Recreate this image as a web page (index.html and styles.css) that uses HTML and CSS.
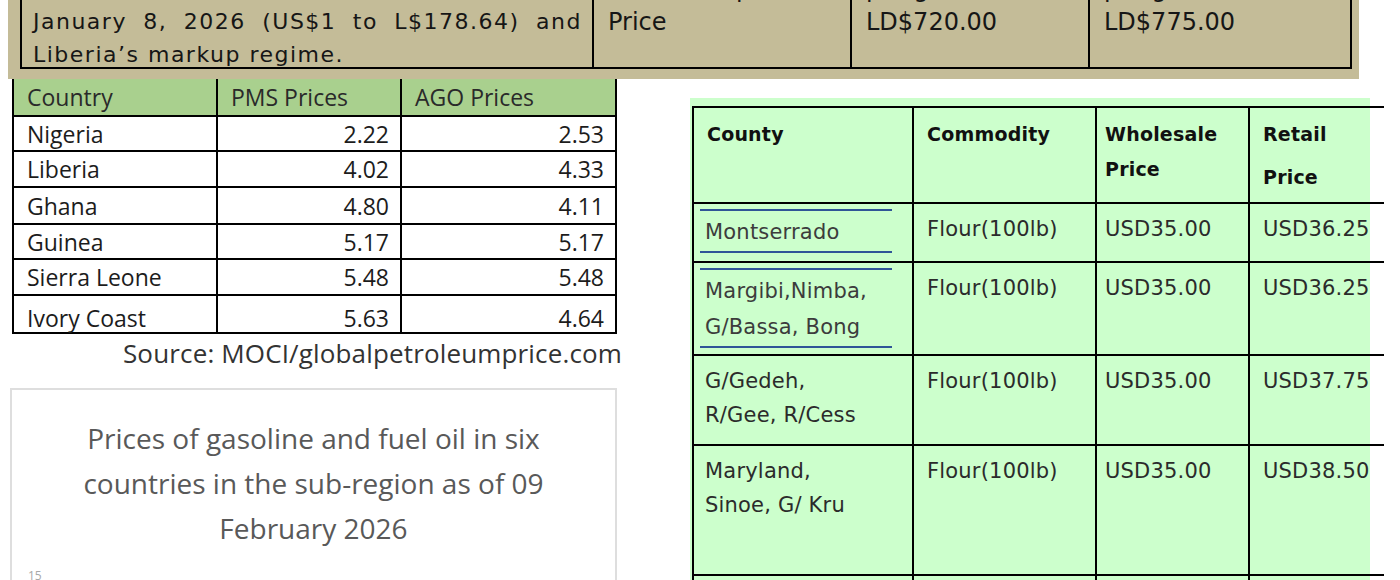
FILE: index.html
```html
<!DOCTYPE html>
<html lang="en">
<head>
<meta charset="utf-8">
<title>Fuel and flour prices</title>
<link rel="stylesheet" href="styles.css">
</head>
<body>
<div class="page">
  <div class="band">
    <table class="band-table">
      <colgroup><col class="bc1"><col class="bc2"><col class="bc3"><col class="bc4"></colgroup>
      <tr>
        <td class="band-text">
          <div class="line">by the Central Bank of Liberia as of</div>
          <div class="jline">January 8, 2026 (US$1 to L$178.64) and</div>
          <div class="line">Liberia’s markup regime.</div>
        </td>
        <td class="band-val"><div class="line">Retail Pump</div><div class="line">Price</div></td>
        <td class="band-val"><div class="line">per gallon</div><div class="line">LD$720.00</div></td>
        <td class="band-val"><div class="line">per gallon</div><div class="line">LD$775.00</div></td>
      </tr>
    </table>
  </div>

  <div class="lower">
    <div class="left-col">
      <table class="fuel">
        <colgroup><col class="fc1"><col class="fc2"><col class="fc3"></colgroup>
        <tr class="fuel-head"><th>Country</th><th>PMS Prices</th><th>AGO Prices</th></tr>
        <tr class="r1"><td>Nigeria</td><td class="num">2.22</td><td class="num">2.53</td></tr>
        <tr class="r2"><td>Liberia</td><td class="num">4.02</td><td class="num">4.33</td></tr>
        <tr class="r3"><td>Ghana</td><td class="num">4.80</td><td class="num">4.11</td></tr>
        <tr class="r4"><td>Guinea</td><td class="num">5.17</td><td class="num">5.17</td></tr>
        <tr class="r5"><td>Sierra Leone</td><td class="num">5.48</td><td class="num">5.48</td></tr>
        <tr class="r6"><td>Ivory Coast</td><td class="num">5.63</td><td class="num">4.64</td></tr>
      </table>
      <p class="source">Source: MOCI/globalpetroleumprice.com</p>
      <div class="caption">
        <p class="caption-text">Prices of gasoline and fuel oil in six<br>countries in the sub-region as of 09<br>February 2026</p>
        <p class="caption-note">15</p>
      </div>
    </div>

    <div class="right-col">
      <table class="flour">
        <colgroup><col class="gc1"><col class="gc2"><col class="gc3"><col class="gc4"></colgroup>
        <tr class="h-row">
          <th>County</th>
          <th>Commodity</th>
          <th class="wh-h">Wholesale<br>Price</th>
          <th class="retail-h">Retail<br>Price</th>
        </tr>
        <tr class="row-a">
          <td><div class="county-box">Montserrado</div></td>
          <td>Flour(100lb)</td><td class="wh">USD35.00</td><td>USD36.25</td>
        </tr>
        <tr class="row-b">
          <td><div class="county-box">Margibi,Nimba,<br>G/Bassa, Bong</div></td>
          <td>Flour(100lb)</td><td class="wh">USD35.00</td><td>USD36.25</td>
        </tr>
        <tr class="row-c">
          <td>G/Gedeh,<br>R/Gee, R/Cess</td>
          <td>Flour(100lb)</td><td class="wh">USD35.00</td><td>USD37.75</td>
        </tr>
        <tr class="row-d">
          <td>Maryland,<br>Sinoe, G/ Kru</td>
          <td>Flour(100lb)</td><td class="wh">USD35.00</td><td>USD38.50</td>
        </tr>
        <tr class="row-e">
          <td>&nbsp;</td><td>&nbsp;</td><td>&nbsp;</td><td>&nbsp;</td>
        </tr>
      </table>
    </div>
  </div>
</div>
</body>
</html>
```

FILE: styles.css
```css
* { box-sizing: border-box; }
html, body { margin: 0; padding: 0; background: #ffffff; }
p { margin: 0; }

.page {
  width: 1400px;
  height: 580px;
  overflow: hidden;
  background: #ffffff;
}

/* ---------- tan band at the top ---------- */
.band {
  width: 1351px;
  margin: -23px 0 0 8px;
  padding: 0 9px 10px 12px;
  background: #c4bc98;
}
.band-table {
  border-collapse: collapse;
  width: 1330px;
  table-layout: fixed;
  font-family: "DejaVu Sans", sans-serif;
  color: #161616;
}
.bc1 { width: 572px; }
.bc2 { width: 258px; }
.bc3 { width: 238px; }
.bc4 { width: 262px; }
.band-table td {
  border: 2px solid #000;
  border-top: none;
  vertical-align: top;
  padding: 0;
}
.band-table .line,
.band-table .jline {
  line-height: 24px;
  height: 24px;
  white-space: nowrap;
}
.band-table .line + .line,
.band-table .line + .jline,
.band-table .jline + .line { margin-top: 9px; }
.band-text {
  padding: 0 10px 0 11px !important;
  font-size: 22px;
  letter-spacing: 1.5px;
}
.band-text .jline {
  white-space: normal;
  text-align: justify;
  text-align-last: justify;
}
.band-val {
  padding: 0 0 0 14px !important;
  font-size: 24px;
  letter-spacing: 0;
}

/* ---------- lower area ---------- */
.lower {
  display: flex;
  align-items: flex-start;
}
.left-col {
  width: 612px;
  margin-left: 10px;
}
.right-col {
  width: 680px;
  height: 520px;
  margin: 19px 0 0 68px;
  padding: 8px 0 0 2px;
  background: #ccffcc;
}

/* fuel price table */
.fuel {
  margin-left: 2px;
  width: 603px;
  border-collapse: collapse;
  table-layout: fixed;
  font-family: "Open Sans", sans-serif;
  font-size: 23px;
  color: #1c1c1c;
}
.fc1 { width: 204px; }
.fc2 { width: 184px; }
.fc3 { width: 215px; }
.fuel th, .fuel td {
  border: 2px solid #000;
  padding: 0 11px 0 13px;
  text-align: left;
  font-weight: normal;
  line-height: 28px;
  white-space: nowrap;
}
.fuel-head th {
  border-top: none;
  background: #a9d08e;
  height: 37px;
  color: #2a2a2a;
}
.fuel .num { text-align: right; }
.fuel .r1 td { height: 35px; }
.fuel .r2 td { height: 36px; }
.fuel .r3 td { height: 37px; }
.fuel .r4 td { height: 35px; }
.fuel .r5 td { height: 36px; }
.fuel .r6 td { height: 38px; vertical-align: bottom; padding-bottom: 0; }

.source {
  text-align: right;
  font-family: "Open Sans", sans-serif;
  font-size: 26px;
  letter-spacing: 0.15px;
  line-height: 30px;
  margin-top: 4px;
  color: #333;
}

.caption {
  width: 607px;
  height: 200px;
  margin-top: 20px;
  border: 2px solid #dedede;
  padding-top: 26px;
  font-family: "Open Sans", sans-serif;
  color: #595959;
}
.caption-text {
  text-align: center;
  font-size: 28px;
  line-height: 45px;
}
.caption-note {
  margin: 16px 0 0 16px;
  font-size: 12px;
  color: #a8a8a8;
}

/* flour price table */
.flour {
  width: 691px;
  border-collapse: collapse;
  table-layout: fixed;
  font-family: "DejaVu Sans", sans-serif;
  font-size: 21px;
  color: #2b2b2b;
  letter-spacing: 0.2px;
}
.gc1 { width: 220px; }
.gc2 { width: 183px; }
.gc3 { width: 153px; }
.gc4 { width: 135px; }
.flour th, .flour td {
  border: 2px solid #000;
  vertical-align: top;
  text-align: left;
  padding: 8px 0 0 13px;
  line-height: 34px;
  white-space: nowrap;
}
.flour th:last-child, .flour td:last-child { border-right: none; }
.flour th {
  font-size: 19px;
  font-weight: bold;
  color: #111;
  padding-top: 9px;
  line-height: 35px;
}
.flour .wh-h, .flour .wh { padding-left: 8px; }
.flour .retail-h { line-height: 43px; padding-top: 5px; }
.h-row th { height: 96px; }
.row-a td { height: 59px; }
.row-b td { height: 93px; }
.row-c td { height: 90px; }
.row-d td { height: 130px; }
.row-e td { height: 60px; }
.flour td:first-child { padding-left: 11px; }
.flour .row-a td:first-child, .flour .row-b td:first-child { padding: 5px 20px 0 6px; }
.county-box {
  border-top: 2px solid #2f5597;
  border-bottom: 2px solid #2f5597;
  padding: 3px 0 1px 5px;
  line-height: 36px;
  color: #3c3c3c;
}
```
